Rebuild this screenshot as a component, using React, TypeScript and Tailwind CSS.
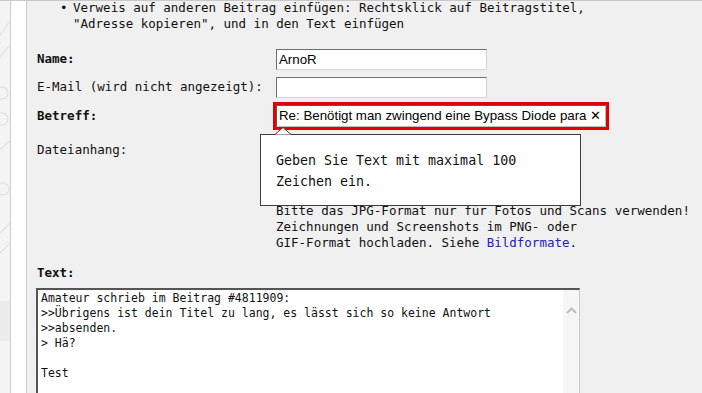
import React from 'react';

const mono = "font-['DejaVu_Sans_Mono',monospace]";
const sans = "font-['Liberation_Sans',Arial,sans-serif]";

const quote = [
  'Amateur schrieb im Beitrag #4811909:',
  '>>Übrigens ist dein Titel zu lang, es lässt sich so keine Antwort',
  '>>absenden.',
  '> Hä?',
  '',
  'Test',
];

const SideStrip = () => (
  <div className="relative w-[10px] shrink-0 overflow-hidden bg-[#f4f4f4]">
    <svg width="10" height="393" className="absolute left-0 top-0">
      <g fill="none" stroke="#e4e4e4" strokeWidth="1.5">
        <path d="M-4 40 L10 20" />
        <path d="M-4 60 L10 44" />
        <circle cx="2" cy="92" r="6" />
        <circle cx="2" cy="118" r="6" />
        <path d="M-2 150 L10 140" />
        <circle cx="3" cy="188" r="6" />
        <path d="M-4 236 L10 222" />
        <path d="M-4 256 L10 242" />
      </g>
      <rect x="0" y="300" width="10" height="40" fill="#ececec" />
    </svg>
  </div>
);

const Field = ({ value }: { value?: string }) => (
  <div
    className={`flex h-[21px] w-[211px] items-center border border-t-[#707070] border-l-[#707070] border-r-[#d6d6d6] border-b-[#d6d6d6] bg-white px-[2px] text-[13.3px] text-black ${sans}`}
  >
    {value}
  </div>
);

const Tooltip = () => (
  <div className="absolute left-[-16px] top-[29px] z-10">
    <svg width="18" height="8" className="absolute left-[15px] top-[-7px]">
      <path d="M0 7.5 L8 0.5 L16 7.5" fill="#fff" stroke="#3c3c3c" strokeWidth="1" />
    </svg>
    <div
      className={`h-[72px] w-[321px] border border-[#3c3c3c] bg-white pl-[15px] pt-[15px] text-[13.3px] leading-[21px] text-[#111] ${mono}`}
    >
      <div>Geben Sie Text mit maximal 100</div>
      <div>Zeichen ein.</div>
    </div>
  </div>
);

export default function App() {
  return (
    <div className="flex h-[393px] w-[702px] overflow-hidden border-t border-[#c9c9c9] bg-[#f0f0f0]">
      <SideStrip />
      <div className="w-[17px] shrink-0 border-x border-[#cdcdcd] bg-white" />
      <div className={`flex-1 pl-[10px] text-[12.5px] text-[#111] ${mono}`}>
        <ul className="mt-[-1px] pl-[23px] leading-[16px]">
          <li className="flex">
            <span className="w-[13px] shrink-0">•</span>
            <span>
              Verweis auf anderen Beitrag einfügen: Rechtsklick auf Beitragstitel,
              <br />
              "Adresse kopieren", und in den Text einfügen
            </span>
          </li>
        </ul>

        <div className="mt-[17px] flex h-[21px] items-center">
          <label className="w-[239px] font-bold">Name:</label>
          <Field value="ArnoR" />
        </div>

        <div className="mt-[7px] flex h-[21px] items-center">
          <label className="w-[239px]">E-Mail (wird nicht angezeigt):</label>
          <Field />
        </div>

        <div className="mt-[4px] flex h-[28px] items-center">
          <label className="w-[236px] font-bold">Betreff:</label>
          <div className="relative border-[3px] border-[#e30000]">
            <div
              className={`flex h-[22px] w-[330px] items-center justify-between border border-t-[#5a5a5a] border-l-[#5a5a5a] border-r-[#bdbdbd] border-b-[#bdbdbd] bg-white pl-[2px] pr-[4px] text-[13.3px] text-black ${sans}`}
            >
              <span>Re: Benötigt man zwingend eine Bypass Diode para</span>
              <span className="text-[13px]">✕</span>
            </div>
            <Tooltip />
          </div>
        </div>

        <div className="mt-[12px] flex leading-[16px]">
          <label className="w-[239px]">Dateianhang:</label>
          <div>
            <div className="h-[61px]" />
            <div>Bitte das JPG-Format nur für Fotos und Scans verwenden!</div>
            <div>Zeichnungen und Screenshots im PNG- oder</div>
            <div>
              GIF-Format hochladen. Siehe <a className="text-[#2222bb]">Bildformate</a>.
            </div>
          </div>
        </div>

        <div className="mt-[14px] font-bold leading-[16px]">Text:</div>

        <div className="ml-[-1px] mt-[7px] flex h-[120px] w-[544px] border-l-2 border-t-2 border-r border-l-[#555] border-t-[#555] border-r-[#c8c8c8] bg-white">
          <div className="flex-1 whitespace-pre pl-[3px] pt-[1px] text-[11.5px] leading-[15px] text-[#111]">
            {quote.map((l, i) => (
              <div key={i} className="h-[15px]">
                {l}
              </div>
            ))}
          </div>
          <div className="flex w-[16px] shrink-0 justify-center bg-[#f6f6f6] pt-[17px]">
            <svg width="11" height="7" viewBox="0 0 11 7">
              <path d="M1 6 L5.5 1.5 L10 6" fill="none" stroke="#bdbdbd" strokeWidth="2" />
            </svg>
          </div>
        </div>
      </div>
    </div>
  );
}
